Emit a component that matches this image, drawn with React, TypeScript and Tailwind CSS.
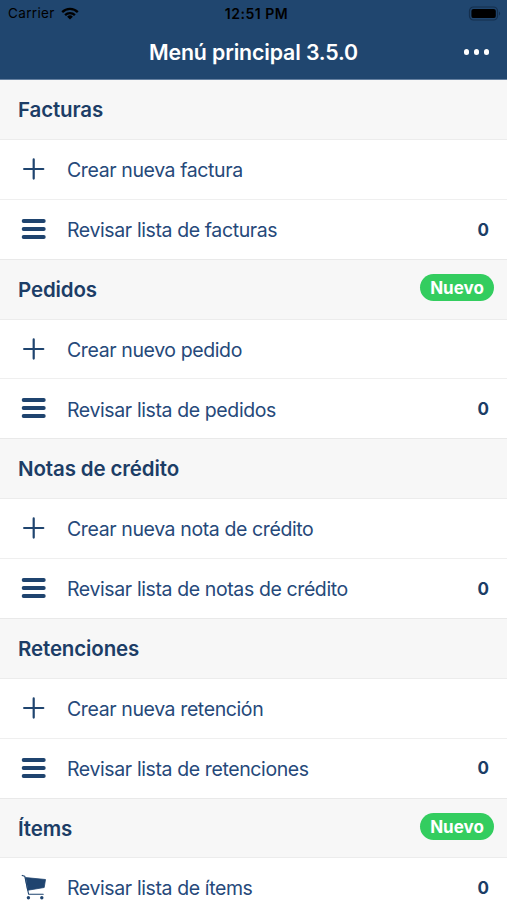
import { Fragment } from 'react';
import { clsx } from 'clsx';

type IconName = 'add' | 'list' | 'cart';

interface Row {
  icon: IconName;
  label: string;
  count?: number;
}

interface Section {
  title: string;
  isNew?: boolean;
  rows: Row[];
}

const sections: Section[] = [
  {
    title: 'Facturas',
    rows: [
      { icon: 'add', label: 'Crear nueva factura' },
      { icon: 'list', label: 'Revisar lista de facturas', count: 0 },
    ],
  },
  {
    title: 'Pedidos',
    isNew: true,
    rows: [
      { icon: 'add', label: 'Crear nuevo pedido' },
      { icon: 'list', label: 'Revisar lista de pedidos', count: 0 },
    ],
  },
  {
    title: 'Notas de crédito',
    rows: [
      { icon: 'add', label: 'Crear nueva nota de crédito' },
      { icon: 'list', label: 'Revisar lista de notas de crédito', count: 0 },
    ],
  },
  {
    title: 'Retenciones',
    rows: [
      { icon: 'add', label: 'Crear nueva retención' },
      { icon: 'list', label: 'Revisar lista de retenciones', count: 0 },
    ],
  },
  {
    title: 'Ítems',
    isNew: true,
    rows: [{ icon: 'cart', label: 'Revisar lista de ítems', count: 0 }],
  },
];

function RowIcon({ name }: { name: IconName }) {
  return (
    <svg viewBox="0 0 26 26" className="w-[26px] h-[26px] mb-[1px] shrink-0 text-[#1f446f]" fill="none" stroke="currentColor" strokeLinecap="round">
      {name === 'add' && <path d="M12.7 3.4v19.2M3.1 13h19.2" strokeWidth="2.2" />}
      {name === 'list' && <path d="M2.6 5h20.2M2.6 13h20.2M2.6 21h20.2" strokeWidth="3.8" />}
      {name === 'cart' && (
        <>
          <path d="M1.2 1.4l2.6 0.9 3.8 17.9h14.6" strokeWidth="1.1" strokeLinejoin="round" />
          <path d="M4.7 3.6l19.8 1.9-1.3 8-16.2 2.7z" fill="currentColor" strokeWidth="0.8" strokeLinejoin="round" />
          <circle cx="7.4" cy="23.7" r="1.7" fill="currentColor" stroke="none" />
          <circle cx="20.8" cy="23.7" r="1.7" fill="currentColor" stroke="none" />
        </>
      )}
    </svg>
  );
}

function StatusBar() {
  return (
    <div className="grid grid-cols-3 items-center h-[27px] pl-[8px] pr-[6px] text-black text-[13.5px] leading-none">
      <div className="flex items-center gap-[6px]">
        <span className="pt-[1px] tracking-[0.35px]">Carrier</span>
        <svg viewBox="0 0 18 13" className="w-[18px] h-[13px]" fill="none" stroke="currentColor" strokeWidth="2.3">
          <path d="M1.2 5.1a11 11 0 0 1 15.6 0M4.1 8.1a6.9 6.9 0 0 1 9.8 0" />
          <path d="M9 12.6l-2.9-2.9a4.1 4.1 0 0 1 5.8 0z" fill="currentColor" stroke="none" />
        </svg>
      </div>
      <span className="pt-[1px] pl-[4px] text-center text-[14px] font-semibold whitespace-nowrap tracking-[0.5px]">12:51 PM</span>
      <svg viewBox="0 0 33 15" className="w-[33px] h-[15px] justify-self-end">
        <rect x="1.5" y="1" width="28" height="13" rx="4" fill="none" stroke="#142f4d" strokeWidth="1.2" />
        <rect x="3.4" y="2.9" width="24.4" height="9.2" rx="2.2" fill="#000" />
        <path d="M31 5.4v4a2.4 2.4 0 0 0 0-4z" fill="#142f4d" />
      </svg>
    </div>
  );
}

function App() {
  return (
    <div className="h-[900px] overflow-hidden bg-white text-[#26497a] font-['Inter','Liberation_Sans',sans-serif]">
      <header className="h-[79.5px] bg-[#20466f] border-b border-[#6580a0]">
        <StatusBar />
        <div className="grid grid-cols-[1fr_auto_1fr] items-center h-[50px] pr-[18px] text-white">
          <h1 className="col-start-2 pt-px text-[21.3px] font-semibold tracking-[-0.13px] pl-[18px]">Menú principal 3.5.0</h1>
          <div className="flex gap-[4.8px] justify-self-end">
            <span className="w-[5.2px] h-[5.2px] rounded-full bg-white" />
            <span className="w-[5.2px] h-[5.2px] rounded-full bg-white" />
            <span className="w-[5.2px] h-[5.2px] rounded-full bg-white" />
          </div>
        </div>
      </header>

      <main className="pt-[0.7px] bg-[#f7f7f7]">
        {sections.map((section) => (
          <Fragment key={section.title}>
            <div className="flex items-center justify-between h-[59.87px] pl-[18px] pr-[13px] bg-[#f7f7f7] border-b border-[#ececec]">
              <h2 className="pt-[2px] text-[20.5px] font-semibold tracking-[-0.13px] text-[#1c3d66]">{section.title}</h2>
              {section.isNew && (
                <span className="flex items-center justify-center w-[74px] h-[27px] mb-[2.5px] pt-[2px] rounded-full bg-[#33cd5f] text-white text-[17px] font-bold">
                  Nuevo
                </span>
              )}
            </div>
            {section.rows.map((row, i) => (
              <div
                key={row.label}
                className={clsx(
                  'flex items-center h-[59.87px] pl-[21px] pr-[18px] bg-white border-b',
                  i === section.rows.length - 1 ? 'border-[#e9e9e9]' : 'border-[#efefef]'
                )}
              >
                <RowIcon name={row.icon} />
                <span className="ml-[20px] pt-[2.5px] text-[19.5px] tracking-[-0.39px] flex-1">{row.label}</span>
                {row.count !== undefined && (
                  <span className="pt-[2px] text-[17px] font-bold text-[#1c3d66]">{row.count}</span>
                )}
              </div>
            ))}
          </Fragment>
        ))}
      </main>
    </div>
  );
}

export default App;
